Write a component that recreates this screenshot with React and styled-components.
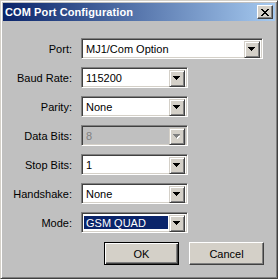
import React from 'react';
import styled, { createGlobalStyle } from 'styled-components';

const Global = createGlobalStyle`
  html, body {
    margin: 0;
    padding: 0;
    background: #c0c0c0;
  }
  body {
    font-family: "Liberation Sans", Arial, sans-serif;
    font-size: 11px;
  }
`;

const Window = styled.div`
  width: 278px;
  height: 279px;
  box-sizing: border-box;
  background: #c0c0c0;
  border: 1px solid;
  border-color: #d4d0c8 #404040 #404040 #d4d0c8;
  box-shadow: inset 1px 1px #ffffff, inset -1px -1px #808080;
  padding: 2px;
  display: flex;
  flex-direction: column;
`;

const TitleBar = styled.div`
  height: 18px;
  display: flex;
  align-items: center;
  padding: 0 2px 0 2px;
  background: linear-gradient(to right, #0a246a, #a6caf0);
`;

const Title = styled.span`
  color: #fff;
  font-weight: bold;
  font-size: 11px;
  letter-spacing: 0.1px;
`;

const CloseButton = styled.div`
  margin-left: auto;
  width: 16px;
  height: 14px;
  box-sizing: border-box;
  background: #d4d0c8;
  border: 1px solid;
  border-color: #ffffff #404040 #404040 #ffffff;
  box-shadow: inset -1px -1px #808080;
  display: flex;
  align-items: center;
  justify-content: center;
`;

const Form = styled.div`
  display: grid;
  grid-template-columns: 69px auto;
  column-gap: 9px;
  row-gap: 8px;
  padding-top: 17px;
  align-items: center;
  justify-items: start;
`;

const Label = styled.div`
  justify-self: end;
  color: #000;
`;

const Combo = styled.div`
  width: ${p => p.$w}px;
  height: 21px;
  box-sizing: border-box;
  border: 1px solid;
  border-color: #808080 #ffffff #ffffff #808080;
  box-shadow: inset 1px 1px #404040, inset -1px -1px #d4d0c8;
  padding: 2px;
  background: ${p => (p.$disabled ? '#c0c0c0' : '#ffffff')};
  display: flex;
`;

const Value = styled.div`
  flex: 1;
  display: flex;
  align-items: center;
  margin: ${p => (p.$selected ? '1px 1px 1px 0' : '0')};
  padding-left: ${p => (p.$selected ? '2px' : '2px')};
  background: ${p => (p.$selected ? '#0a246a' : 'transparent')};
  color: ${p => (p.$selected ? '#fff' : p.$disabled ? '#808080' : '#000')};
  white-space: nowrap;
  overflow: hidden;
`;

const DropButton = styled.div`
  width: 16px;
  height: 17px;
  box-sizing: border-box;
  background: #d4d0c8;
  border: 1px solid;
  border-color: #d4d0c8 #404040 #404040 #d4d0c8;
  box-shadow: inset 1px 1px #ffffff, inset -1px -1px #808080;
  display: flex;
  align-items: center;
  justify-content: center;
`;

const Buttons = styled.div`
  display: flex;
  justify-content: flex-end;
  gap: 10px;
  padding: 9px 11px 0 0;
`;

const Button = styled.div`
  width: 75px;
  height: 23px;
  box-sizing: border-box;
  background: #d4d0c8;
  border: 1px solid;
  border-color: ${p => (p.$default ? '#000 #000 #000 #000' : '#ffffff #404040 #404040 #ffffff')};
  box-shadow: ${p =>
    p.$default
      ? 'inset 1px 1px #ffffff, inset -1px -1px #404040, inset -2px -2px #808080'
      : 'inset -1px -1px #808080'};
  display: flex;
  align-items: center;
  justify-content: center;
  color: #000;
`;

const Arrow = ({ disabled }) => (
  <svg width="8" height="5" viewBox="0 0 8 5" shapeRendering="crispEdges">
    {disabled && <path d="M2 2h5v1h-1v1h-1v1h-1v-1h-1v-1h-1z" fill="#ffffff" />}
    <path d="M0 0h7v1h-1v1h-1v1h-1v1h-1v-1h-1v-1h-1v-1h-1z" fill={disabled ? '#808080' : '#000'} />
  </svg>
);

const CloseGlyph = () => (
  <svg width="8" height="7" viewBox="0 0 8 7" shapeRendering="crispEdges">
    <path
      d="M0 0h2v1h1v1h2v-1h1v-1h2v1h-1v1h-1v1h-1v1h1v1h1v1h1v1h-2v-1h-1v-1h-2v1h-1v1h-2v-1h1v-1h1v-1h1v-1h-1v-1h-1v-1h-1z"
      fill="#000"
    />
  </svg>
);

const fields = [
  { label: 'Port:', value: 'MJ1/Com Option', w: 182 },
  { label: 'Baud Rate:', value: '115200', w: 107 },
  { label: 'Parity:', value: 'None', w: 107 },
  { label: 'Data Bits:', value: '8', w: 107, disabled: true },
  { label: 'Stop Bits:', value: '1', w: 107 },
  { label: 'Handshake:', value: 'None', w: 107 },
  { label: 'Mode:', value: 'GSM QUAD', w: 107, selected: true },
];

export default function App() {
  return (
    <>
      <Global />
      <Window>
        <TitleBar>
          <Title>COM Port Configuration</Title>
          <CloseButton>
            <CloseGlyph />
          </CloseButton>
        </TitleBar>
        <Form>
          {fields.map(f => (
            <React.Fragment key={f.label}>
              <Label>{f.label}</Label>
              <Combo $w={f.w} $disabled={f.disabled}>
                <Value $selected={f.selected} $disabled={f.disabled}>
                  {f.value}
                </Value>
                <DropButton>
                  <Arrow disabled={f.disabled} />
                </DropButton>
              </Combo>
            </React.Fragment>
          ))}
        </Form>
        <Buttons>
          <Button $default>OK</Button>
          <Button>Cancel</Button>
        </Buttons>
      </Window>
    </>
  );
}
